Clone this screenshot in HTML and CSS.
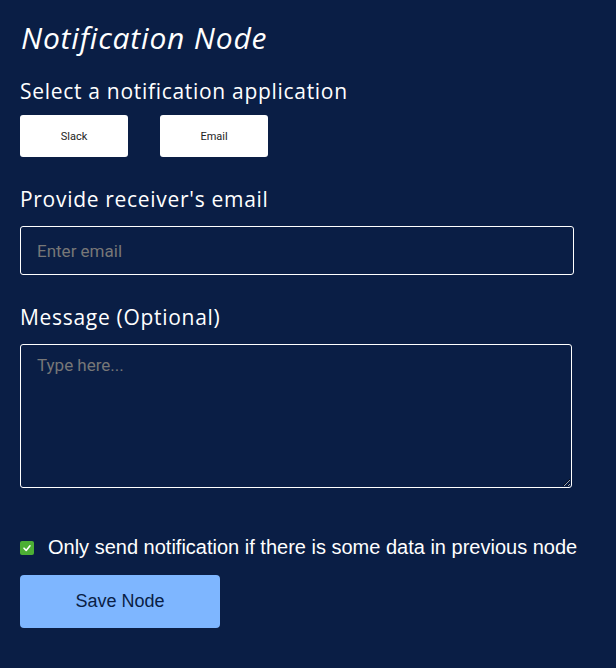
FILE: index.html
```html
<!DOCTYPE html>
<html lang="en">
<head>
  <meta charset="UTF-8">
  <title>Notification Node</title>
  <meta name="viewport" content="width=device-width, initial-scale=1.0">
  <link rel="stylesheet" href="styles.css">
</head>
<body>
  <div class="panel">
    <h1>Notification Node</h1>

    <h2>Select a notification application</h2>
    <div class="apps">
      <button type="button" class="app">Slack</button>
      <button type="button" class="app">Email</button>
    </div>

    <h2 class="field-title">Provide receiver's email</h2>
    <input type="text" class="email" placeholder="Enter email">

    <h2 class="field-title">Message (Optional)</h2>
    <textarea class="message" placeholder="Type here..."></textarea>

    <label class="check">
      <span class="box">
        <svg width="10" height="10" viewBox="0 0 10 10"><path d="M2 5.2 L4.2 7.4 L8 2.8" fill="none" stroke="#fff" stroke-width="1.6" stroke-linecap="round" stroke-linejoin="round"/></svg>
      </span>
      Only send notification if there is some data in previous node
    </label>

    <button type="button" class="save">Save Node</button>
  </div>
</body>
</html>
```

FILE: styles.css
```css
body {
  margin: 0;
  background-color: #0a1e45;
  color: #fff;
  font-family: "Open Sans", Lato, sans-serif;
}
.panel {
  padding: 18px 20px 40px 20px;
  display: flex;
  flex-direction: column;
  align-items: flex-start;
}
h1 {
  margin: 0;
  font-size: 30px;
  font-weight: 400;
  font-style: italic;
  letter-spacing: 0.8px;
  line-height: 40px;
  padding-left: 1px;
}
h2 {
  margin: 19px 0 0 0;
  font-size: 21px;
  font-weight: 400;
  letter-spacing: 0.7px;
  line-height: 28px;
}
.field-title {
  margin-top: 28px;
}
.apps {
  display: flex;
  gap: 32px;
  margin-top: 10px;
}
.app {
  width: 108px;
  height: 42px;
  background: #fff;
  color: #222;
  border: none;
  border-radius: 3px;
  font-family: Roboto, sans-serif;
  font-size: 11px;
  cursor: pointer;
}
.email {
  box-sizing: border-box;
  width: 554px;
  height: 49px;
  margin-top: 13px;
  padding: 0 16px;
  background: transparent;
  color: #fff;
  border: 1px solid #fff;
  border-radius: 3px;
  font-family: Roboto, sans-serif;
  font-size: 17px;
}
.message {
  box-sizing: border-box;
  width: 552px;
  height: 144px;
  margin-top: 13px;
  padding: 10px 16px;
  background: transparent;
  color: #fff;
  border: 1px solid #fff;
  border-radius: 3px;
  font-family: Roboto, sans-serif;
  font-size: 17px;
  resize: both;
}
.email::placeholder, .message::placeholder {
  color: #777;
}
.check {
  display: flex;
  align-items: center;
  gap: 14px;
  margin-top: 48px;
  font-family: "Liberation Sans", Arial, sans-serif;
  font-size: 20px;
}
.box {
  width: 14px;
  height: 14px;
  border-radius: 2px;
  background: #4caf34;
  display: flex;
  align-items: center;
  justify-content: center;
}
.save {
  width: 200px;
  height: 53px;
  margin-top: 16px;
  background: #7eb6ff;
  color: #0a1e45;
  border: none;
  border-radius: 4px;
  font-family: "Liberation Sans", Arial, sans-serif;
  font-size: 18px;
  cursor: pointer;
}
```
